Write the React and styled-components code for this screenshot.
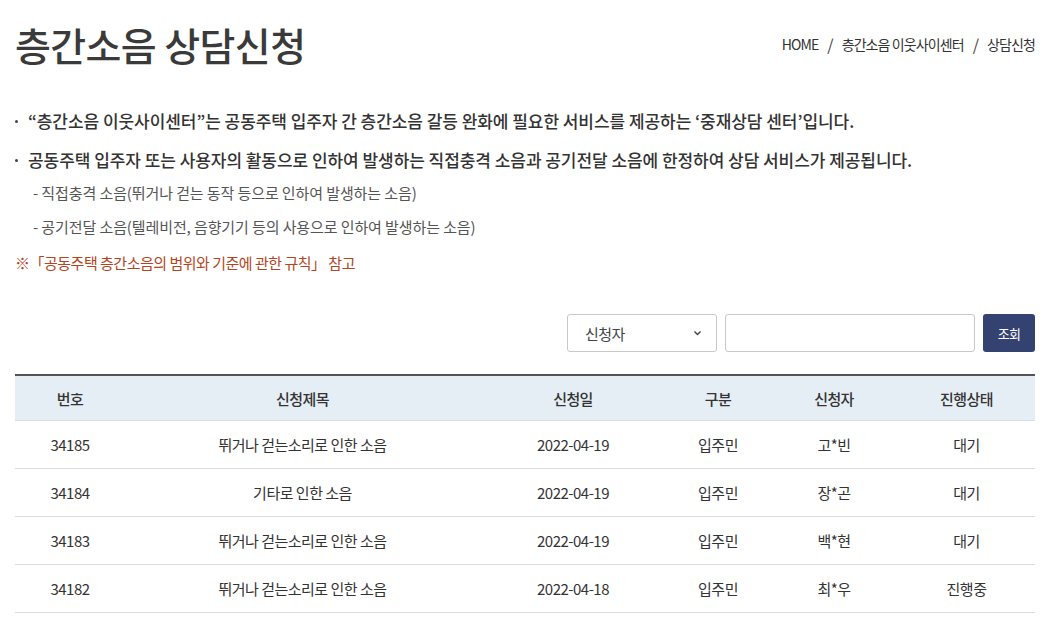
import React, { useState } from "react";
import styled, { createGlobalStyle } from "styled-components";

const GlobalStyle = createGlobalStyle`
    body {
        margin: 0;
        background: #ffffff;
        font-family: "Noto Sans CJK KR", "Noto Sans", sans-serif;
        color: #333333;
    }
`;

const Page = styled.div`
    width: 1020px;
    padding: 0 22px 0 15px;
`;

const TitleRow = styled.div`
    display: flex;
    justify-content: space-between;
    align-items: center;
    height: 88px;
`;

const Title = styled.h1`
    margin: 0;
    font-size: 39px;
    font-weight: 500;
    letter-spacing: -0.6px;
    color: #3a3a3a;
`;

const Breadcrumb = styled.div`
    display: flex;
    align-items: center;
    gap: 9px;
    font-size: 14px;
    letter-spacing: -0.9px;
    color: #333333;
`;

const Slash = styled.span`
    font-size: 16px;
    color: #444444;
`;

const Intro = styled.ul`
    list-style: none;
    margin: 21px 0 0;
    padding: 0;
`;

const Bullet = styled.li`
    position: relative;
    padding-left: 13px;
    font-size: 17px;
    font-weight: 500;
    letter-spacing: -0.05px;
    line-height: 24px;
    color: #333333;
    margin-bottom: 15px;

    &::before {
        content: "";
        position: absolute;
        left: 0;
        top: 11px;
        width: 3px;
        height: 3px;
        border-radius: 50%;
        background: #444444;
    }
`;

const SubList = styled.div`
    display: flex;
    flex-direction: column;
    gap: 12px;
    margin: -5px 0 0 18px;
`;

const SubItem = styled.div`
    font-size: 15px;
    letter-spacing: -0.1px;
    line-height: 22px;
    color: #555555;
`;

const Note = styled.p`
    margin: 14px 0 0;
    font-size: 15px;
    letter-spacing: -0.5px;
    line-height: 22px;
    color: #b4441e;
`;

const SearchBar = styled.div`
    display: flex;
    justify-content: flex-end;
    gap: 8px;
    margin-top: 40px;
`;

const SelectBox = styled.div`
    display: flex;
    align-items: center;
    justify-content: space-between;
    box-sizing: border-box;
    width: 150px;
    height: 38px;
    padding: 0 14px 0 17px;
    border: 1px solid #c8c8c8;
    border-radius: 3px;
    font-size: 15px;
    letter-spacing: -0.6px;
    color: #444444;
`;

const SearchInput = styled.input`
    box-sizing: border-box;
    width: 250px;
    height: 38px;
    border: 1px solid #c8c8c8;
    border-radius: 3px;
    outline: none;
`;

const SearchButton = styled.button`
    width: 52px;
    height: 38px;
    border: none;
    border-radius: 3px;
    background: #344271;
    color: #ffffff;
    font-family: "Noto Sans CJK KR", sans-serif;
    font-size: 13px;
    letter-spacing: -0.6px;
`;

const Table = styled.table`
    width: 1020px;
    margin-top: 22px;
    border-collapse: collapse;
    border-top: 2px solid #555555;
    table-layout: fixed;
`;

const Th = styled.th`
    width: ${props => props.$w}px;
    height: 44px;
    background: #e6eef5;
    border-bottom: 1px solid #d6dde4;
    font-size: 15px;
    font-weight: 500;
    letter-spacing: -0.6px;
    color: #333333;
    text-align: center;
    padding: 0;
`;

const Td = styled.td`
    height: 47px;
    border-bottom: 1px solid #dcdcdc;
    font-size: 15px;
    letter-spacing: -0.5px;
    color: #333333;
    text-align: center;
    padding: 0;
`;

const columns = [
    { label: "번호", w: 110 },
    { label: "신청제목", w: 355 },
    { label: "신청일", w: 186 },
    { label: "구분", w: 104 },
    { label: "신청자", w: 128 },
    { label: "진행상태", w: 137 },
];

const rows = [
    ["34185", "뛰거나 걷는소리로 인한 소음", "2022-04-19", "입주민", "고*빈", "대기"],
    ["34184", "기타로 인한 소음", "2022-04-19", "입주민", "장*곤", "대기"],
    ["34183", "뛰거나 걷는소리로 인한 소음", "2022-04-19", "입주민", "백*현", "대기"],
    ["34182", "뛰거나 걷는소리로 인한 소음", "2022-04-18", "입주민", "최*우", "진행중"],
];

function Chevron() {
    return (
        <svg width="9" height="6" viewBox="0 0 9 6">
            <path d="M1.5 1.5 L4.5 4.5 L7.5 1.5" fill="none" stroke="#444" strokeWidth="1.4" />
        </svg>
    );
}

export default function App() {
    const [keyword, setKeyword] = useState("");

    return (
        <Page>
            <GlobalStyle />
            <TitleRow>
                <Title>층간소음 상담신청</Title>
                <Breadcrumb>
                    <span>HOME</span>
                    <Slash>/</Slash>
                    <span>층간소음 이웃사이센터</span>
                    <Slash>/</Slash>
                    <span>상담신청</span>
                </Breadcrumb>
            </TitleRow>

            <Intro>
                <Bullet>“층간소음 이웃사이센터”는 공동주택 입주자 간 층간소음 갈등 완화에 필요한 서비스를 제공하는 ‘중재상담 센터’입니다.</Bullet>
                <Bullet>공동주택 입주자 또는 사용자의 활동으로 인하여 발생하는 직접충격 소음과 공기전달 소음에 한정하여 상담 서비스가 제공됩니다.</Bullet>
            </Intro>
            <SubList>
                <SubItem>- 직접충격 소음(뛰거나 걷는 동작 등으로 인하여 발생하는 소음)</SubItem>
                <SubItem>- 공기전달 소음(텔레비전, 음향기기 등의 사용으로 인하여 발생하는 소음)</SubItem>
            </SubList>
            <Note>※「공동주택 층간소음의 범위와 기준에 관한 규칙」 참고</Note>

            <SearchBar>
                <SelectBox>
                    <span>신청자</span>
                    <Chevron />
                </SelectBox>
                <SearchInput value={keyword} onChange={(e) => setKeyword(e.target.value)} />
                <SearchButton>조회</SearchButton>
            </SearchBar>

            <Table>
                <thead>
                    <tr>
                        {columns.map((c) => (
                            <Th key={c.label} $w={c.w}>{c.label}</Th>
                        ))}
                    </tr>
                </thead>
                <tbody>
                    {rows.map((r) => (
                        <tr key={r[0]}>
                            {r.map((cell, i) => (
                                <Td key={i}>{cell}</Td>
                            ))}
                        </tr>
                    ))}
                </tbody>
            </Table>
        </Page>
    );
}
